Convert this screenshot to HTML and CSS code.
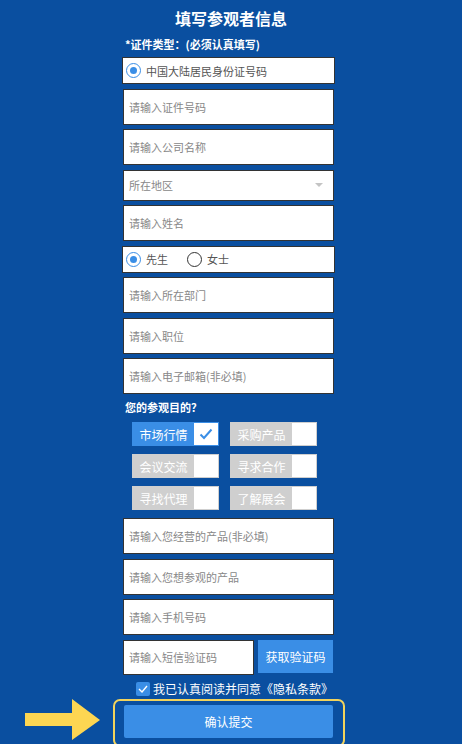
FILE: index.html
```html
<!DOCTYPE html>
<html lang="zh-CN">
<head>
  <meta charset="UTF-8" />
  <meta name="viewport" content="width=device-width, initial-scale=1" />
  <title>填写参观者信息</title>
  <link rel="stylesheet" href="styles.css">
</head>
<body>
  <h2 class="title">填写参观者信息</h2>

  <form class="form" onsubmit="return false">
    <div class="label">*证件类型：(必须认真填写)</div>
    <div class="radio-row">
      <label class="radio checked"><span class="dot"></span>中国大陆居民身份证号码</label>
    </div>

    <input class="field" type="text" placeholder="请输入证件号码" />
    <input class="field" type="text" placeholder="请输入公司名称" />
    <div class="select">
      <span>所在地区</span>
      <span class="caret"></span>
    </div>
    <input class="field" type="text" placeholder="请输入姓名" />
    <div class="radio-row">
      <label class="radio checked"><span class="dot"></span>先生</label>
      <label class="radio"><span class="dot"></span>女士</label>
    </div>
    <input class="field" type="text" placeholder="请输入所在部门" />
    <input class="field" type="text" placeholder="请输入职位" />
    <input class="field" type="text" placeholder="请输入电子邮箱(非必填)" />

    <div class="label purpose">您的参观目的？</div>
    <div class="options">
      <label class="opt active"><span class="opt-text">市场行情</span><span class="opt-box">
        <svg width="14" height="12" viewBox="0 0 14 12"><path d="M1.5 6.5 L5 10 L12.5 1.5" fill="none" stroke="#3a8ee6" stroke-width="2"/></svg>
      </span></label>
      <label class="opt"><span class="opt-text">采购产品</span><span class="opt-box"></span></label>
      <label class="opt"><span class="opt-text">会议交流</span><span class="opt-box"></span></label>
      <label class="opt"><span class="opt-text">寻求合作</span><span class="opt-box"></span></label>
      <label class="opt"><span class="opt-text">寻找代理</span><span class="opt-box"></span></label>
      <label class="opt"><span class="opt-text">了解展会</span><span class="opt-box"></span></label>
    </div>

    <input class="field" type="text" placeholder="请输入您经营的产品(非必填)" />
    <input class="field" type="text" placeholder="请输入您想参观的产品" />
    <input class="field" type="text" placeholder="请输入手机号码" />
    <div class="sms-row">
      <input class="field sms" type="text" placeholder="请输入短信验证码" />
      <button type="button" class="sms-btn">获取验证码</button>
    </div>

    <label class="agree">
      <span class="check">
        <svg width="10" height="8" viewBox="0 0 10 8"><path d="M1 4 L4 7 L9 1" fill="none" stroke="#fff" stroke-width="1.4"/></svg>
      </span>
      我已认真阅读并同意《隐私条款》
    </label>

    <div class="submit-wrap">
      <svg class="arrow" width="76" height="44" viewBox="0 0 76 44">
        <polygon points="0,16 47,16 47,2 75,23 47,43 47,29 0,29" fill="#fdd652"/>
      </svg>
      <button type="submit" class="submit">确认提交</button>
    </div>
  </form>
</body>
</html>
```

FILE: styles.css
```css
* {
  margin: 0;
  padding: 0;
  box-sizing: border-box;
  font-family: "Microsoft YaHei", "Noto Sans CJK SC", sans-serif;
}

body {
  background: #0a4fa0;
  color: #fff;
  width: 462px;
  height: 744px;
  overflow: hidden;
}

.title {
  text-align: center;
  font-size: 16px;
  line-height: 20px;
  font-weight: bold;
  padding-top: 8px;
  margin-bottom: 8px;
}

.form {
  width: 213px;
  margin-left: 122px;
  display: flex;
  flex-direction: column;
}

.label {
  font-size: 11px;
  font-weight: bold;
  line-height: 16px;
  padding-left: 3px;
  margin-bottom: 5px;
}

.radio-row {
  height: 27px;
  background: #fff;
  border: 1px solid #333;
  display: flex;
  align-items: center;
  padding-left: 3px;
  gap: 19px;
  margin-bottom: 4.5px;
}

.radio {
  display: flex;
  align-items: center;
  gap: 5px;
  font-size: 11px;
  color: #555;
}

.dot {
  width: 15px;
  height: 15px;
  border-radius: 50%;
  border: 1px solid #333;
  position: relative;
}

.radio.checked .dot {
  border-color: #3a8ee6;
}

.radio.checked .dot::after {
  content: "";
  position: absolute;
  left: 3px;
  top: 3px;
  width: 7px;
  height: 7px;
  border-radius: 50%;
  background: #3a8ee6;
}

.field {
  width: 211px;
  height: 36px;
  margin-left: 1px;
  border: 1px solid #333;
  background: #fff;
  padding-left: 5px;
  font-size: 11px;
  margin-bottom: 4.5px;
  outline: none;
}

.field::placeholder {
  color: #888;
}

.select {
  width: 211px;
  height: 31px;
  margin-left: 1px;
  border: 1px solid #333;
  background: #fff;
  padding: 0 10px 0 5px;
  font-size: 11px;
  color: #888;
  display: flex;
  align-items: center;
  justify-content: space-between;
  margin-bottom: 4.5px;
}

.caret {
  width: 0;
  height: 0;
  border-left: 4px solid transparent;
  border-right: 4px solid transparent;
  border-top: 4px solid #c4c4c4;
}

.label.purpose {
  margin-top: 0;
  margin-bottom: 7.5px;
}

.options {
  display: grid;
  grid-template-columns: 87px 87px;
  column-gap: 11px;
  row-gap: 8px;
  padding-left: 10px;
  margin-bottom: 8px;
}

.opt {
  height: 24px;
  display: flex;
  background: #cfcfcf;
  border: 1px solid #cfcfcf;
}

.opt.active {
  background: #3a8ee6;
  border-color: #3a8ee6;
}

.opt-text {
  flex: 1;
  font-size: 12px;
  color: #fff;
  display: flex;
  align-items: center;
  justify-content: center;
}

.opt-box {
  width: 24px;
  background: #fff;
  display: flex;
  align-items: center;
  justify-content: center;
}

.sms-row {
  display: flex;
  align-items: flex-start;
  gap: 4px;
  margin-left: 1px;
}

.field.sms {
  width: 131px;
  margin-left: 0;
  height: 35px;
}

.sms-btn {
  width: 75px;
  height: 33px;
  border: none;
  background: #3a8ee6;
  color: #fff;
  font-size: 12px;
  font-family: inherit;
}

.agree {
  display: flex;
  align-items: center;
  gap: 3px;
  font-size: 12px;
  margin-left: 14px;
  margin-top: 2px;
  line-height: 16px;
}

.check {
  width: 14px;
  height: 14px;
  background: #3a8ee6;
  border-radius: 2px;
  display: flex;
  align-items: center;
  justify-content: center;
}

.submit-wrap {
  position: relative;
  margin-top: 2px;
  margin-left: -9px;
  width: 232px;
  height: 48px;
  border: 2px solid #f2d35c;
  border-radius: 7px;
  padding: 4px 10px 0 9px;
}

.arrow {
  position: absolute;
  left: -90px;
  top: -4px;
}

.submit {
  width: 209px;
  height: 33px;
  border: none;
  border-radius: 2px;
  background: #3a8ee6;
  color: #fff;
  font-size: 12px;
  font-family: inherit;
}
```
